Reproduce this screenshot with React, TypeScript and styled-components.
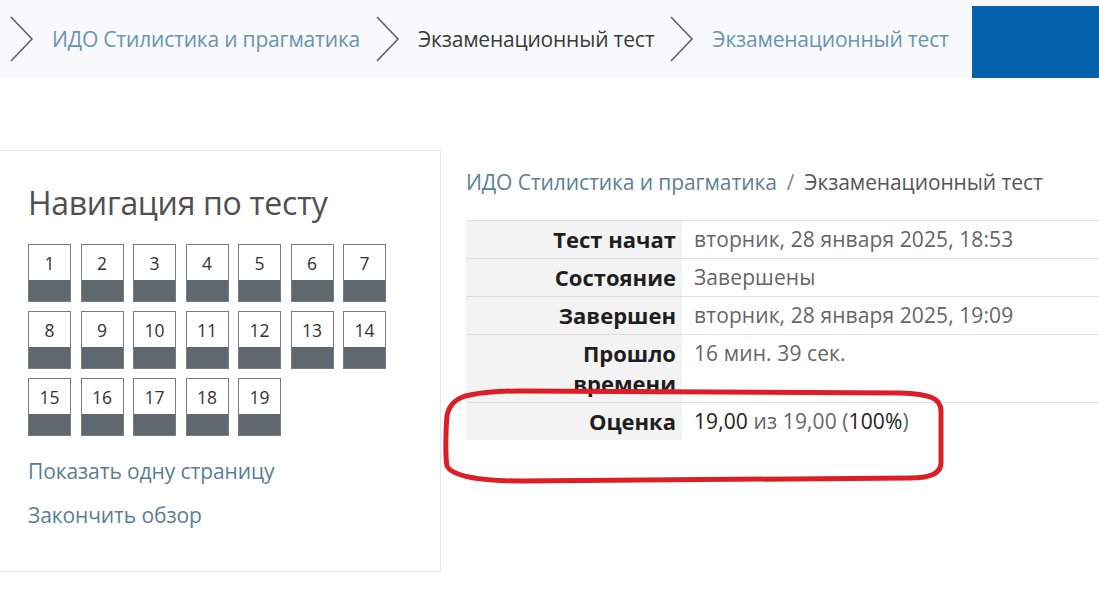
import React from 'react'
import styled, { createGlobalStyle } from 'styled-components'

const GlobalStyle = createGlobalStyle`
  html, body {
    margin: 0;
    padding: 0;
    background: #ffffff;
    overflow: hidden;
  }
  body {
    font-family: 'Open Sans', 'Noto Sans', 'DejaVu Sans', sans-serif;
    color: #333;
  }
`

const Page = styled.div`
  width: 1099px;
  height: 600px;
  display: flex;
  flex-direction: column;
`

const TopBar = styled.div`
  height: 78px;
  background: #f7f9fa;
  display: flex;
  align-items: center;
  padding-left: 10px;
`

const Crumb = styled.span<{ $link?: boolean }>`
  font-size: 21px;
  color: ${(p) => (p.$link ? '#6b93b3' : '#3a3a3a')};
  padding: 0 16px 0 18px;
  white-space: nowrap;
  letter-spacing: -0.2px;
`

const BlueBlock = styled.div`
  margin-left: auto;
  align-self: flex-end;
  width: 127px;
  height: 72px;
  background: #0563ae;
`

const Main = styled.div`
  display: flex;
  margin-top: 72px;
`

const NavPanel = styled.div`
  box-sizing: border-box;
  width: 441px;
  height: 422px;
  border: 1px solid #e6e6e6;
  border-left: none;
  padding: 30px 0 0 28px;
`

const NavTitle = styled.h2`
  margin: 0 0 19px;
  font-size: 32px;
  line-height: 44px;
  font-weight: 400;
  color: #505050;
  letter-spacing: -0.3px;
`

const QGrid = styled.div`
  display: grid;
  grid-template-columns: repeat(7, 43px);
  column-gap: 9.5px;
  row-gap: 9px;
`

const QButton = styled.div`
  box-sizing: border-box;
  height: 58px;
  border: 1px solid #777d82;
  display: flex;
  flex-direction: column;
`

const QNum = styled.div`
  height: 35px;
  background: #fff;
  display: flex;
  align-items: center;
  justify-content: center;
  font-size: 17.5px;
  color: #333;
`

const QFill = styled.div`
  flex: 1;
  background: #5f686f;
`

const NavLinks = styled.div`
  margin-top: 21px;
  display: flex;
  flex-direction: column;
  gap: 15px;
`

const NavLink = styled.a`
  font-size: 21px;
  color: #5b7e93;
  text-decoration: none;
  line-height: 29px;
  letter-spacing: -0.1px;
`

const Content = styled.div`
  flex: 1;
  margin-left: 25px;
  padding-top: 18px;
  position: relative;
`

const PathLine = styled.div`
  font-size: 21px;
  line-height: 28px;
  color: #555;
  letter-spacing: -0.1px;
  white-space: nowrap;
  margin-bottom: 24px;
`

const PathLink = styled.span`
  color: #5d7f93;
`

const Sep = styled.span`
  color: #888;
  padding: 0 10px;
`

const SummaryTable = styled.table`
  width: 100%;
  border-collapse: collapse;
  border-top: 1px solid #dedede;
`

const Row = styled.tr<{ $last?: boolean }>`
  border-bottom: ${(p) => (p.$last ? 'none' : '1px solid #dfdfdf')};
`

const Th = styled.th`
  width: 210px;
  background: #f3f3f3;
  text-align: right;
  vertical-align: top;
  font-size: 22px;
  font-weight: 700;
  color: #1e1e1e;
  padding: 3px 6px 4px 0;
  line-height: 30px;
`

const Td = styled.td`
  vertical-align: top;
  font-size: 21px;
  color: #666;
  padding: 3px 0 4px 12px;
  line-height: 30px;
  letter-spacing: 0.1px;
`

const Strong = styled.span`
  color: #222;
`

const Marker = styled.svg`
  position: absolute;
  left: -26px;
  top: 236px;
  pointer-events: none;
`

const questions = Array.from({ length: 19 }, (_, i) => i + 1)

const Chevron = () => (
  <svg width="24" height="46" viewBox="0 0 24 46">
    <polyline points="1,1 22,23 1,45" fill="none" stroke="#606060" strokeWidth="1.6" />
  </svg>
)

const App: React.FC = () => {
  return (
    <Page>
      <GlobalStyle />
      <TopBar>
        <Chevron />
        <Crumb $link>ИДО Стилистика и прагматика</Crumb>
        <Chevron />
        <Crumb>Экзаменационный тест</Crumb>
        <Chevron />
        <Crumb $link>Экзаменационный тест</Crumb>
        <BlueBlock />
      </TopBar>
      <Main>
        <NavPanel>
          <NavTitle>Навигация по тесту</NavTitle>
          <QGrid>
            {questions.map((q) => (
              <QButton key={q}>
                <QNum>{q}</QNum>
                <QFill />
              </QButton>
            ))}
          </QGrid>
          <NavLinks>
            <NavLink>Показать одну страницу</NavLink>
            <NavLink>Закончить обзор</NavLink>
          </NavLinks>
        </NavPanel>
        <Content>
          <PathLine>
            <PathLink>ИДО Стилистика и прагматика</PathLink>
            <Sep>/</Sep>
            Экзаменационный тест
          </PathLine>
          <SummaryTable>
            <tbody>
              <Row>
                <Th>Тест начат</Th>
                <Td>вторник, 28 января 2025, 18:53</Td>
              </Row>
              <Row>
                <Th>Состояние</Th>
                <Td>Завершены</Td>
              </Row>
              <Row>
                <Th>Завершен</Th>
                <Td>вторник, 28 января 2025, 19:09</Td>
              </Row>
              <Row>
                <Th>
                  Прошло
                  <br />
                  времени
                </Th>
                <Td>16 мин. 39 сек.</Td>
              </Row>
              <Row $last>
                <Th>Оценка</Th>
                <Td>
                  <Strong>19,00</Strong> из 19,00 (<Strong>100%</Strong>)
                </Td>
              </Row>
            </tbody>
          </SummaryTable>
          <Marker width="510" height="100" viewBox="0 0 510 100">
            <path
              d="M30,9 C45,6 60,5 80,5 L460,7 C490,8 501,12 501,25 L501,77 C501,88 490,92 470,92 L80,95 C40,95 12,90 7,80 C5,70 6,40 7,30 C9,18 18,11 30,9 Z"
              fill="none"
              stroke="#dc1f26"
              strokeWidth="5"
            />
          </Marker>
        </Content>
      </Main>
    </Page>
  )
}

export default App
